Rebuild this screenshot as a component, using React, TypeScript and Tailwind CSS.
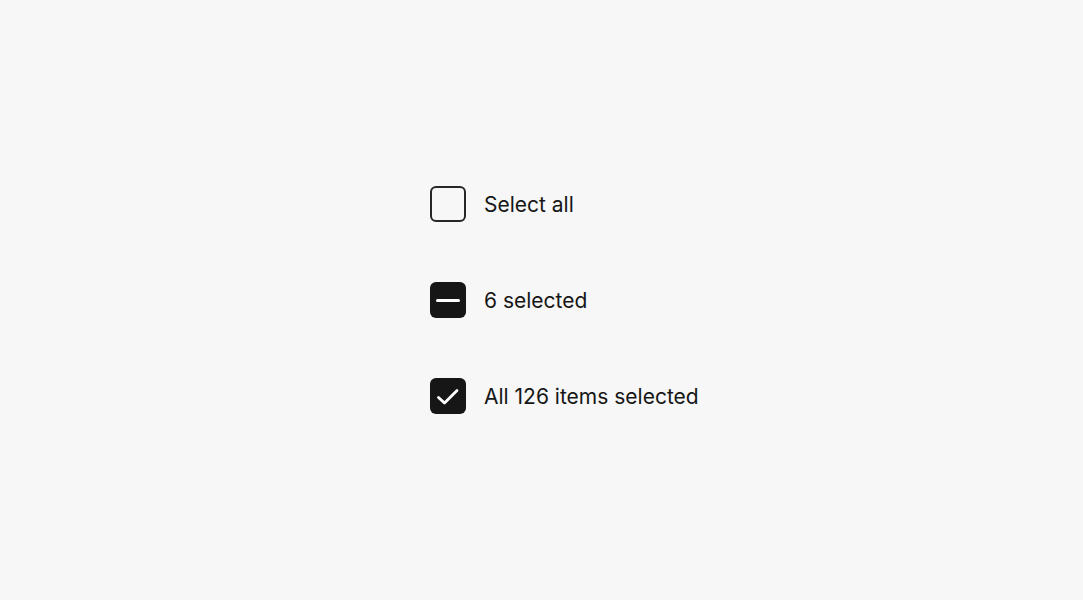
export default function App() {
  const font = { fontFamily: "Inter, 'Noto Sans', sans-serif" };
  return (
    <div className="flex h-[600px] w-full items-center bg-[#f7f7f7] text-[#161616]" style={font}>
      <div className="ml-[430px] flex flex-col gap-[60px]">
        <div className="flex items-center gap-[18px]">
          <div className="h-9 w-9 rounded-[6px] border-2 border-[#262626] bg-[#f7f7f7]" />
          <span className="text-[21px] leading-none">Select all</span>
        </div>
        <div className="flex items-center gap-[18px]">
          <div className="flex h-9 w-9 items-center justify-center rounded-[6px] bg-[#161616]">
            <div className="h-[3px] w-[24px] rounded-full bg-white" />
          </div>
          <span className="text-[21px] leading-none">6 selected</span>
        </div>
        <div className="flex items-center gap-[18px]">
          <div className="flex h-9 w-9 items-center justify-center rounded-[6px] bg-[#161616]">
            <svg width="36" height="36" viewBox="0 0 36 36" fill="none">
              <path d="M8.5 19.5 L14.5 25 L27 12.5" stroke="white" strokeWidth="2.8" strokeLinecap="round" strokeLinejoin="round" />
            </svg>
          </div>
          <span className="text-[21px] leading-none">All 126 items selected</span>
        </div>
      </div>
    </div>
  );
}
